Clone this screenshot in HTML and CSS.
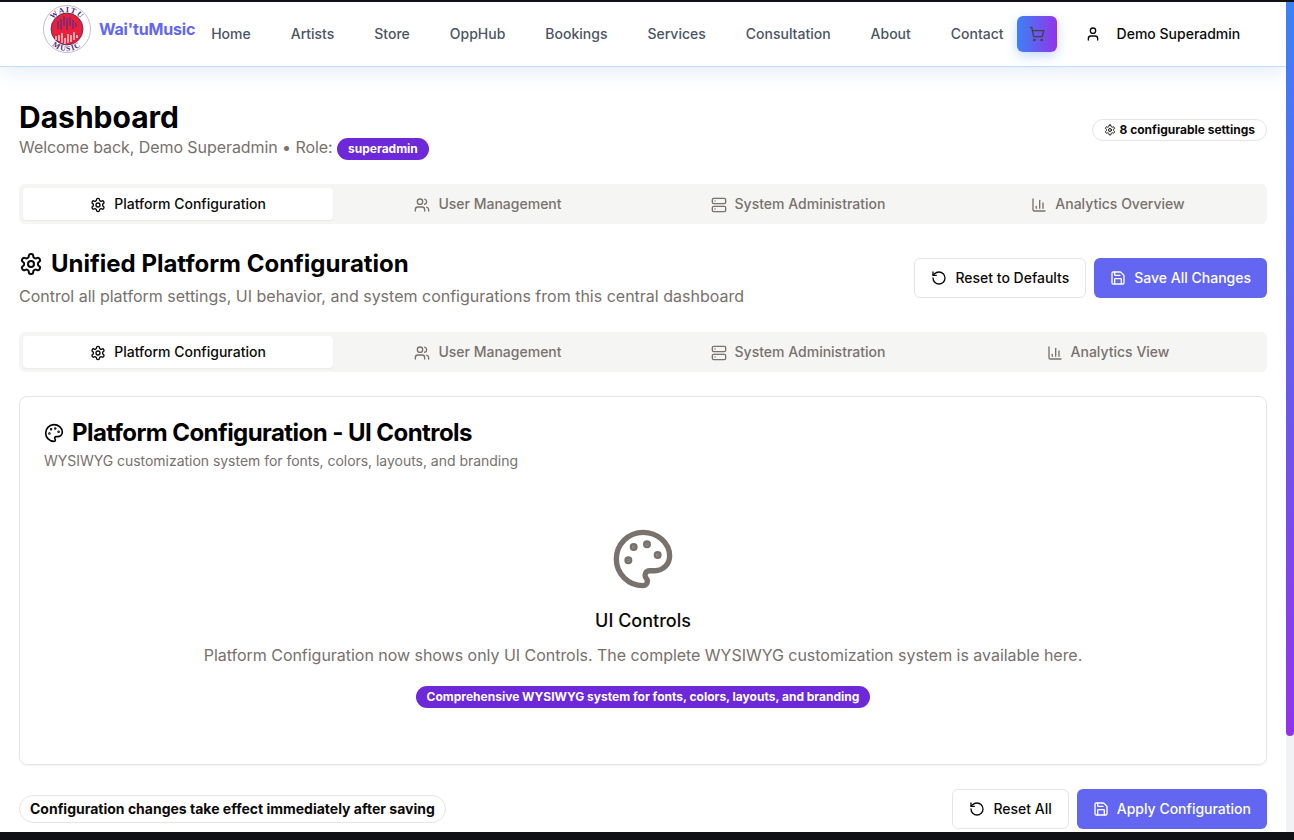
FILE: index.html
```html
<!DOCTYPE html>
<html lang="en">
<head>
    <meta charset="UTF-8">
    <meta name="viewport" content="width=device-width, initial-scale=1.0">
    <title>Wai'tuMusic - Dashboard</title>
    <link rel="stylesheet" href="styles.css">
</head>
<body>
    <svg class="icon-defs" aria-hidden="true">
        <symbol id="i-settings" viewBox="0 0 24 24"><path d="M12.22 2h-.44a2 2 0 0 0-2 2v.18a2 2 0 0 1-1 1.73l-.43.25a2 2 0 0 1-2 0l-.15-.08a2 2 0 0 0-2.73.73l-.22.38a2 2 0 0 0 .73 2.73l.15.1a2 2 0 0 1 1 1.72v.51a2 2 0 0 1-1 1.74l-.15.09a2 2 0 0 0-.73 2.73l.22.38a2 2 0 0 0 2.73.73l.15-.08a2 2 0 0 1 2 0l.43.25a2 2 0 0 1 1 1.73V20a2 2 0 0 0 2 2h.44a2 2 0 0 0 2-2v-.18a2 2 0 0 1 1-1.73l.43-.25a2 2 0 0 1 2 0l.15.08a2 2 0 0 0 2.73-.73l.22-.39a2 2 0 0 0-.73-2.73l-.15-.08a2 2 0 0 1-1-1.74v-.5a2 2 0 0 1 1-1.74l.15-.09a2 2 0 0 0 .73-2.73l-.22-.38a2 2 0 0 0-2.73-.73l-.15.08a2 2 0 0 1-2 0l-.43-.25a2 2 0 0 1-1-1.73V4a2 2 0 0 0-2-2z"/><circle cx="12" cy="12" r="3"/></symbol>
        <symbol id="i-users" viewBox="0 0 24 24"><path d="M16 21v-2a4 4 0 0 0-4-4H6a4 4 0 0 0-4 4v2"/><circle cx="9" cy="7" r="4"/><path d="M22 21v-2a4 4 0 0 0-3-3.87"/><path d="M16 3.13a4 4 0 0 1 0 7.75"/></symbol>
        <symbol id="i-server" viewBox="0 0 24 24"><rect x="2" y="2" width="20" height="8" rx="2"/><rect x="2" y="14" width="20" height="8" rx="2"/><path d="M6 6h.01"/><path d="M6 18h.01"/></symbol>
        <symbol id="i-chart" viewBox="0 0 24 24"><path d="M3 3v16a2 2 0 0 0 2 2h16"/><path d="M18 17V9"/><path d="M13 17V5"/><path d="M8 17v-3"/></symbol>
        <symbol id="i-reset" viewBox="0 0 24 24"><path d="M3 12a9 9 0 1 0 9-9 9.75 9.75 0 0 0-6.74 2.74L3 8"/><path d="M3 3v5h5"/></symbol>
        <symbol id="i-save" viewBox="0 0 24 24"><path d="M15.2 3a2 2 0 0 1 1.4.6l3.8 3.8a2 2 0 0 1 .6 1.4V19a2 2 0 0 1-2 2H5a2 2 0 0 1-2-2V5a2 2 0 0 1 2-2z"/><path d="M17 21v-7a1 1 0 0 0-1-1H8a1 1 0 0 0-1 1v7"/><path d="M7 3v4a1 1 0 0 0 1 1h7"/></symbol>
        <symbol id="i-palette" viewBox="0 0 24 24"><circle cx="13.5" cy="6.5" r=".5" fill="currentColor"/><circle cx="17.5" cy="10.5" r=".5" fill="currentColor"/><circle cx="8.5" cy="7.5" r=".5" fill="currentColor"/><circle cx="6.5" cy="12.5" r=".5" fill="currentColor"/><path d="M12 2C6.5 2 2 6.5 2 12s4.5 10 10 10c.926 0 1.648-.746 1.648-1.688 0-.437-.18-.835-.437-1.125-.29-.289-.438-.652-.438-1.125a1.64 1.64 0 0 1 1.668-1.668h1.996c3.051 0 5.555-2.503 5.555-5.554C21.965 6.012 17.461 2 12 2z"/></symbol>
        <symbol id="i-cart" viewBox="0 0 24 24"><circle cx="8" cy="21" r="1"/><circle cx="19" cy="21" r="1"/><path d="M2.05 2.05h2l2.66 12.42a2 2 0 0 0 2 1.58h9.78a2 2 0 0 0 1.95-1.57l1.65-7.43H5.12"/></symbol>
        <symbol id="i-user" viewBox="0 0 24 24"><path d="M19 21v-2a4 4 0 0 0-4-4H9a4 4 0 0 0-4 4v2"/><circle cx="12" cy="7" r="4"/></symbol>
    </svg>

    <div class="window">
        <div class="page">
            <header class="navbar">
                <a class="brand">
                    <svg class="logo" viewBox="0 0 48 48">
                        <defs>
                            <path id="arc-top" d="M7.200 24a16.800 16.800 0 0 1 33.600 0"/>
                            <path id="arc-bottom" d="M2 24a22 22 0 0 0 44 0"/>
                        </defs>
                        <circle cx="24" cy="24" r="23.500" fill="#fff" stroke="#b9a9cf" stroke-width=".8"/>
                        <circle cx="24" cy="24" r="16" fill="#e8203a" stroke="#3f2a5a" stroke-width=".8"/>
                        <g class="logo-bars-top">
                            <path d="M15 16v8M18 14v11M21 11v10M24 13v12M27 12v9M30 15v9M33 18v4"/>
                        </g>
                        <g class="logo-bars-bottom">
                            <path d="M13 31v4M16 30v6M19 28v10M22 33v6M25 29v9M28 30v7M31 27v8M34 30v3"/>
                        </g>
                        <text class="logo-text"><textPath href="#arc-top" startOffset="50%" text-anchor="middle">WAITU</textPath></text>
                        <text class="logo-text"><textPath href="#arc-bottom" startOffset="50%" text-anchor="middle">MUSIC</textPath></text>
                    </svg>
                    <span class="brand-name">Wai'tuMusic</span>
                </a>
                <nav class="nav-links">
                    <a>Home</a>
                    <a>Artists</a>
                    <a>Store</a>
                    <a>OppHub</a>
                    <a>Bookings</a>
                    <a>Services</a>
                    <a>Consultation</a>
                    <a>About</a>
                    <a>Contact</a>
                </nav>
                <button class="cart-button"><svg class="icon icon-16"><use href="#i-cart"/></svg></button>
                <a class="user-menu"><svg class="icon icon-16"><use href="#i-user"/></svg><span>Demo Superadmin</span></a>
            </header>

            <main class="content">
                <section class="page-head">
                    <div>
                        <h1>Dashboard</h1>
                        <p class="welcome">Welcome back, Demo Superadmin • Role: <span class="pill pill-purple">superadmin</span></p>
                    </div>
                    <span class="pill pill-outline"><svg class="icon icon-12"><use href="#i-settings"/></svg>8 configurable settings</span>
                </section>

                <div class="tabs">
                    <button class="tab active"><svg class="icon icon-16"><use href="#i-settings"/></svg>Platform Configuration</button>
                    <button class="tab"><svg class="icon icon-16"><use href="#i-users"/></svg>User Management</button>
                    <button class="tab"><svg class="icon icon-16"><use href="#i-server"/></svg>System Administration</button>
                    <button class="tab"><svg class="icon icon-16"><use href="#i-chart"/></svg>Analytics Overview</button>
                </div>

                <section class="section-head">
                    <div>
                        <h2><svg class="icon icon-24"><use href="#i-settings"/></svg>Unified Platform Configuration</h2>
                        <p class="section-sub">Control all platform settings, UI behavior, and system configurations from this central dashboard</p>
                    </div>
                    <div class="actions">
                        <button class="btn btn-outline"><svg class="icon icon-16"><use href="#i-reset"/></svg>Reset to Defaults</button>
                        <button class="btn btn-primary"><svg class="icon icon-16"><use href="#i-save"/></svg>Save All Changes</button>
                    </div>
                </section>

                <div class="tabs">
                    <button class="tab active"><svg class="icon icon-16"><use href="#i-settings"/></svg>Platform Configuration</button>
                    <button class="tab"><svg class="icon icon-16"><use href="#i-users"/></svg>User Management</button>
                    <button class="tab"><svg class="icon icon-16"><use href="#i-server"/></svg>System Administration</button>
                    <button class="tab"><svg class="icon icon-16"><use href="#i-chart"/></svg>Analytics View</button>
                </div>

                <section class="card">
                    <h3><svg class="icon icon-20"><use href="#i-palette"/></svg>Platform Configuration - UI Controls</h3>
                    <p class="card-sub">WYSIWYG customization system for fonts, colors, layouts, and branding</p>
                    <div class="card-body">
                        <svg class="icon icon-64"><use href="#i-palette"/></svg>
                        <h4>UI Controls</h4>
                        <p>Platform Configuration now shows only UI Controls. The complete WYSIWYG customization system is available here.</p>
                        <span class="pill pill-purple">Comprehensive WYSIWYG system for fonts, colors, layouts, and branding</span>
                    </div>
                </section>

                <section class="page-foot">
                    <span class="pill pill-outline pill-large">Configuration changes take effect immediately after saving</span>
                    <div class="actions">
                        <button class="btn btn-outline"><svg class="icon icon-16"><use href="#i-reset"/></svg>Reset All</button>
                        <button class="btn btn-primary"><svg class="icon icon-16"><use href="#i-save"/></svg>Apply Configuration</button>
                    </div>
                </section>
            </main>
        </div>
        <div class="scrollbar"><div class="scrollbar-thumb"></div></div>
    </div>
</body>
</html>
```

FILE: styles.css
```css
* {
    box-sizing: border-box;
}

html, body {
    height: 100%;
}

body {
    margin: 0;
    padding: 2px 0 8px;
    background-color: #0f1117;
    font-family: Inter, "Liberation Sans", sans-serif;
    color: #0c0a09;
    overflow: hidden;
}

h1, h2, h3, h4, p {
    margin: 0;
}

button {
    font-family: inherit;
    border: none;
    cursor: pointer;
}

.icon-defs {
    display: none;
}

.icon {
    fill: none;
    stroke: currentColor;
    stroke-width: 2;
    stroke-linecap: round;
    stroke-linejoin: round;
    flex-shrink: 0;
}

.icon-12 { width: 12px; height: 12px; }
.icon-16 { width: 16px; height: 16px; }
.icon-20 { width: 20px; height: 20px; }
.icon-24 { width: 24px; height: 24px; }
.icon-64 { width: 64px; height: 64px; }

.window {
    display: flex;
    height: 100%;
}

.page {
    flex: 1;
    min-width: 0;
    background-color: #fff;
    overflow: hidden;
}

.scrollbar {
    width: 8px;
    background-color: #f1f2f5;
}

.scrollbar-thumb {
    height: 734px;
    border-radius: 0 0 4px 4px;
    background: linear-gradient(180deg, #3b82f6, #9333ea);
}

/* navbar */
.navbar {
    display: flex;
    align-items: center;
    height: 65px;
    padding-left: 43px;
    background-color: #fff;
    border-bottom: 1px solid #bfdbfe;
    box-shadow: 0 4px 20px rgba(59, 130, 246, 0.15);
}

.brand {
    display: flex;
    align-items: center;
    gap: 8px;
    align-self: flex-start;
    margin-top: 3px;
}

.logo {
    width: 48px;
    height: 48px;
}

.logo-bars-top path,
.logo-bars-bottom path {
    fill: none;
    stroke-width: 1.300;
}

.logo-bars-top path {
    stroke: #5b2a8c;
}

.logo-bars-bottom path {
    stroke: #fde8ea;
}

.logo-text {
    font-family: "Liberation Serif", serif;
    font-weight: 700;
    font-size: 7.800px;
    letter-spacing: 1.200px;
    fill: #4a2a78;
}

.brand-name {
    font-size: 16px;
    font-weight: 700;
    letter-spacing: -0.18px;
    color: #6366f1;
}

.nav-links {
    display: flex;
    gap: 40px;
    margin-left: 16px;
    margin-bottom: 1px;
}

.nav-links a {
    font-size: 14px;
    line-height: 20px;
    font-weight: 500;
    color: #4b5563;
}

.cart-button {
    display: flex;
    align-items: center;
    justify-content: center;
    width: 40px;
    height: 36px;
    margin-left: 13px;
    border-radius: 6px;
    color: #44403c;
    background: linear-gradient(90deg, #3b82f6, #9333ea);
    box-shadow: 0 4px 12px rgba(59, 130, 246, 0.3);
}

.user-menu {
    display: flex;
    align-items: center;
    gap: 16px;
    margin-left: 28px;
    margin-bottom: 1px;
    font-size: 14px;
    line-height: 20px;
    font-weight: 500;
}

/* main */
.content {
    padding: 32px 19px 0;
}

.page-head {
    display: flex;
    justify-content: space-between;
    align-items: center;
}

h1 {
    font-size: 30px;
    line-height: 36px;
    font-weight: 700;
    color: #000;
}

.welcome {
    font-size: 16px;
    line-height: 24px;
    letter-spacing: -0.07px;
    color: #78716c;
}

.pill {
    display: inline-flex;
    align-items: center;
    border-radius: 999px;
    font-size: 12px;
    line-height: 16px;
    font-weight: 700;
    letter-spacing: 0;
}

.pill-purple {
    padding: 3px 11px;
    background-color: #6d28d9;
    color: #fff;
}

.pill-outline {
    gap: 4px;
    padding: 2px 11px;
    border: 1px solid #e7e5e4;
    color: #0c0a09;
}

.pill-large {
    padding: 3px 10px;
    font-size: 14px;
    line-height: 20px;
}

.tabs {
    display: grid;
    grid-template-columns: repeat(4, 1fr);
    height: 40px;
    padding: 4px;
    border-radius: 6px;
    background-color: #f5f5f4;
}

.page-head + .tabs {
    margin-top: 24px;
}

.tab {
    display: flex;
    align-items: center;
    justify-content: center;
    gap: 8px;
    border-radius: 4px;
    background: none;
    padding-bottom: 2px;
    font-size: 14px;
    line-height: 20px;
    font-weight: 500;
    color: #78716c;
}

.tab .icon {
    margin-bottom: -2px;
}

.tab.active {
    background-color: #fff;
    color: #0c0a09;
    box-shadow: 0 1px 2px rgba(0, 0, 0, 0.05);
}

.section-head {
    display: flex;
    justify-content: space-between;
    align-items: center;
    margin: 24px 0;
}

h2 {
    display: flex;
    align-items: center;
    gap: 8px;
    font-size: 24px;
    line-height: 32px;
    font-weight: 700;
    color: #000;
}

h2 .icon {
    color: #0c0a09;
}

.section-sub {
    margin-top: 4px;
    font-size: 16px;
    line-height: 24px;
    color: #78716c;
}

.actions {
    display: flex;
    gap: 8px;
}

.btn {
    display: flex;
    align-items: center;
    gap: 8px;
    height: 40px;
    padding: 0 16px;
    border-radius: 6px;
    font-size: 14px;
    line-height: 18px;
    font-weight: 500;
}

.btn-outline {
    background-color: #fff;
    border: 1px solid #e7e5e4;
    color: #0c0a09;
}

.btn-primary {
    background-color: #6366f1;
    color: #fff;
}

.card {
    margin-top: 24px;
    height: 369px;
    padding: 24px;
    border: 1px solid #e7e5e4;
    border-radius: 8px;
    box-shadow: 0 1px 2px rgba(0, 0, 0, 0.05);
}

h3 {
    display: flex;
    align-items: center;
    gap: 8px;
    font-size: 24px;
    line-height: 24px;
    font-weight: 700;
    letter-spacing: -0.56px;
    color: #000;
}

.card-sub {
    margin-top: 6px;
    font-size: 14px;
    line-height: 20px;
    letter-spacing: -0.03px;
    color: #78716c;
}

.card-body {
    display: flex;
    flex-direction: column;
    align-items: center;
    margin-top: 56px;
    color: #78716c;
}

.card-body h4 {
    margin-top: 16px;
    font-size: 18px;
    line-height: 28px;
    font-weight: 500;
    color: #0c0a09;
}

.card-body p {
    margin-top: 8px;
    font-size: 16px;
    line-height: 24px;
    letter-spacing: -0.03px;
}

.card-body .pill {
    margin-top: 19px;
}

.page-foot {
    display: flex;
    justify-content: space-between;
    align-items: center;
    margin-top: 24px;
}
```
